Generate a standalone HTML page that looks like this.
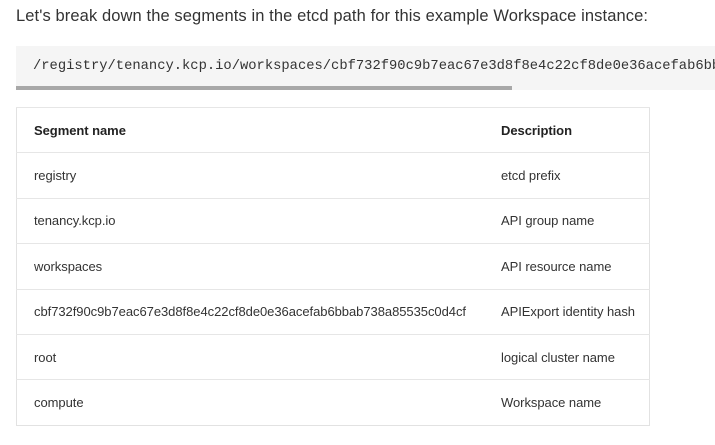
<!DOCTYPE html>
<html><head><style>
body{margin:0;width:715px;height:445px;overflow:hidden;background:#fff;font-family:"Liberation Sans",sans-serif;color:#222;}
p{position:absolute;left:16px;top:7px;margin:0;font-size:16.5px;letter-spacing:0.1px;white-space:nowrap;color:#333}
.code{position:absolute;left:16px;top:46px;width:699px;height:44px;background:#f5f5f5;overflow:hidden}
.code span{position:absolute;left:17px;top:13px;font-family:"Liberation Mono",monospace;font-size:13.8px;color:#333;white-space:nowrap}
.sb{position:absolute;left:0;top:40px;width:496px;height:4px;background:#a8a8a8}
table{position:absolute;left:16px;top:107px;width:634px;border-collapse:collapse;border:1px solid #e2e2e2;font-size:13px;letter-spacing:-0.05px}
td,th{height:44.4px;padding:0 0 0 17px;border-top:1px solid #e6e6e6;text-align:left;white-space:nowrap;color:#333}
th{font-weight:bold;color:#222}
td:first-child,th:first-child{width:450px}
</style></head><body>
<p>Let's break down the segments in the etcd path for this example Workspace instance:</p>
<div class="code"><span>/registry/tenancy.kcp.io/workspaces/cbf732f90c9b7eac67e3d8f8e4c22cf8de0e36acefab6bbab738a85535c0d4cf/root/compute</span><div class="sb"></div></div>
<table>
<tr><th>Segment name</th><th>Description</th></tr>
<tr><td>registry</td><td>etcd prefix</td></tr>
<tr><td>tenancy.kcp.io</td><td>API group name</td></tr>
<tr><td>workspaces</td><td>API resource name</td></tr>
<tr><td>cbf732f90c9b7eac67e3d8f8e4c22cf8de0e36acefab6bbab738a85535c0d4cf</td><td>APIExport identity hash</td></tr>
<tr><td>root</td><td>logical cluster name</td></tr>
<tr><td>compute</td><td>Workspace name</td></tr>
</table>
</body></html>
